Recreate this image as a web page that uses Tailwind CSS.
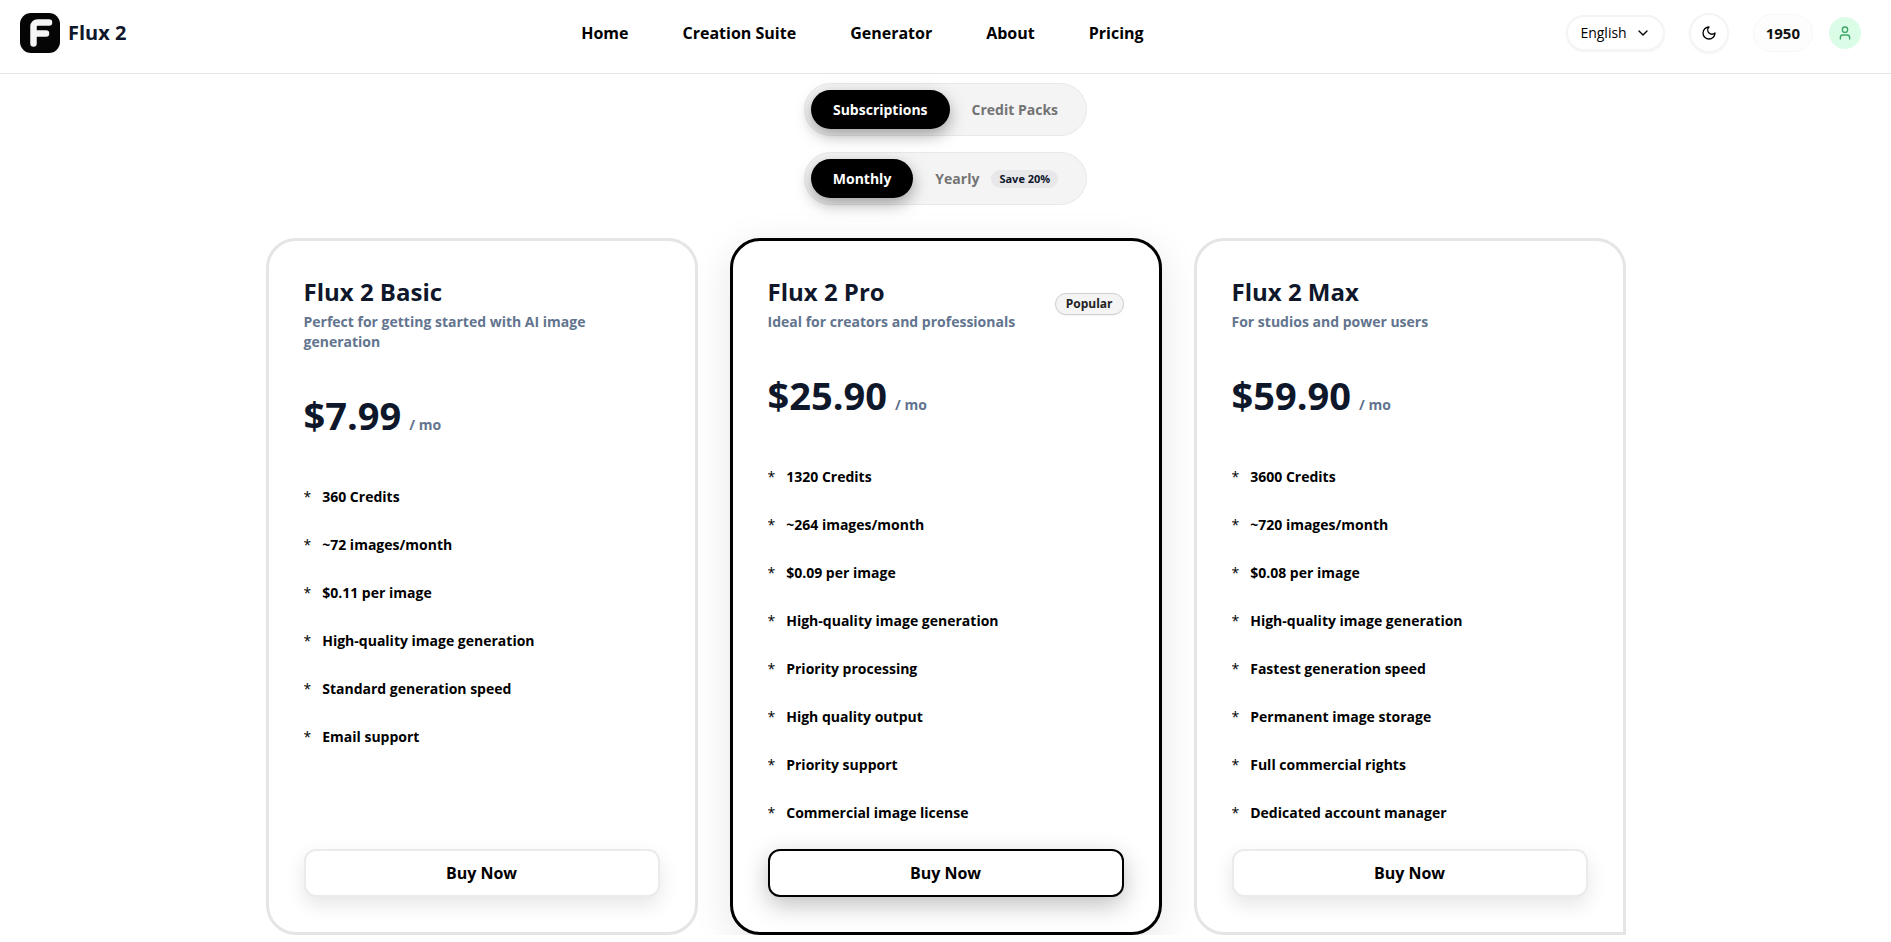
<!DOCTYPE html>
<html lang="en">
	<head>
		<meta charset="UTF-8" />
		<meta name="viewport" content="width=device-width, initial-scale=1.0" />
		<title>Flux 2 - Pricing</title>
		<script src="https://cdn.jsdelivr.net/npm/@tailwindcss/browser@4"></script>
	</head>
	<body class="bg-white font-['Open_Sans','Noto_Sans',sans-serif] text-black">
		<header class="flex items-center border-b border-[#e3e3e3] pt-[13px] pr-[30px] pb-5 pl-5">
			<a href="#" class="flex items-center gap-2">
				<svg viewBox="0 0 40 40" class="h-10 w-10">
					<rect width="40" height="40" rx="11" fill="#050505" />
					<path
						d="M13.5 30.5V13.5a4 4 0 0 1 4-4H29M13.5 20.5H26"
						fill="none"
						stroke="#f5f5f5"
						stroke-width="6.5"
						stroke-linecap="round"
						stroke-linejoin="round" />
				</svg>
				<span class="text-xl leading-7 font-bold text-slate-900">Flux 2</span>
			</a>
			<nav class="flex flex-1 justify-center gap-[54px] pl-8 text-base font-bold">
				<a href="#">Home</a>
				<a href="#">Creation Suite</a>
				<a href="#">Generator</a>
				<a href="#">About</a>
				<a href="#">Pricing</a>
			</nav>
			<div class="flex items-center gap-6">
				<button class="flex h-9 items-center gap-2 rounded-full border-2 border-[#f4f4f4] px-3 text-sm shadow-xs">
					English
					<svg
						viewBox="0 0 24 24"
						fill="none"
						stroke="currentColor"
						stroke-width="2"
						stroke-linecap="round"
						stroke-linejoin="round"
						class="h-4 w-4">
						<path d="m6 9 6 6 6-6" />
					</svg>
				</button>
				<button
					aria-label="Dark mode"
					class="flex h-10 w-10 items-center justify-center rounded-full border-2 border-[#f4f4f4] shadow-xs">
					<svg
						viewBox="0 0 24 24"
						fill="none"
						stroke="currentColor"
						stroke-width="2"
						stroke-linecap="round"
						stroke-linejoin="round"
						class="h-4 w-4">
						<path d="M12 3a6 6 0 0 0 9 9 9 9 0 1 1-9-9Z" />
					</svg>
				</button>
				<div class="flex items-center gap-4">
					<span
						class="flex h-[38px] items-center rounded-full border border-[#f7f7f7] bg-[#fdfdfd] px-3 text-[15px] font-bold text-[#111]"
						>1950</span
					>
					<button
						aria-label="Account"
						class="flex h-8 w-8 items-center justify-center rounded-full bg-green-100 text-[#3fa66b]">
						<svg
							viewBox="0 0 24 24"
							fill="none"
							stroke="currentColor"
							stroke-width="2"
							stroke-linecap="round"
							stroke-linejoin="round"
							class="h-4 w-4">
							<path d="M19 21v-2a4 4 0 0 0-4-4H9a4 4 0 0 0-4 4v2" />
							<circle cx="12" cy="7" r="4" />
						</svg>
					</button>
				</div>
			</div>
		</header>

		<main class="mx-auto max-w-[1360px] pt-[9px]">
			<div class="flex flex-col items-center gap-4 text-sm font-bold">
				<div class="flex rounded-full border border-[#e8e8e8] bg-[#f4f4f4] p-1.5">
					<button class="h-[39px] rounded-full bg-black px-[22px] text-white shadow-[0_6px_16px_rgba(0,0,0,0.35)]">
						Subscriptions
					</button>
					<button class="h-[39px] rounded-full px-[22px] text-[#737373]">Credit Packs</button>
				</div>
				<div class="flex rounded-full border border-[#e8e8e8] bg-[#f4f4f4] p-1.5">
					<button class="h-[39px] rounded-full bg-black px-[22px] text-white shadow-[0_6px_16px_rgba(0,0,0,0.35)]">
						Monthly
					</button>
					<button class="flex h-[39px] items-center gap-3 rounded-full px-[22px] text-[#737373]">
						Yearly
						<span class="rounded-full bg-[#e8e8ea] px-2 text-[11px] leading-[18px] text-slate-900">Save 20%</span>
					</button>
				</div>
			</div>

			<div class="mt-[33px] grid grid-cols-3 gap-8">
				<section class="flex flex-col rounded-[30px] border-3 border-[#e5e5e5] bg-white p-[35px]">
					<h2 class="text-2xl leading-8 font-bold text-slate-900">Flux 2 Basic</h2>
					<p class="mt-1 max-w-[290px] text-sm leading-5 font-bold text-slate-500">
						Perfect for getting started with AI image generation
					</p>
					<p class="mt-[39px] flex items-baseline gap-2 leading-12 font-bold text-slate-900">
						<span class="text-[38px]">$7.99</span>
						<span class="text-sm font-bold text-slate-500">/ mo</span>
					</p>
					<ul class="mt-12 flex flex-col gap-7 text-sm leading-5 font-bold">
						<li class="flex gap-[11px]"><span class="font-normal">*</span>360 Credits</li>
						<li class="flex gap-[11px]"><span class="font-normal">*</span>~72 images/month</li>
						<li class="flex gap-[11px]"><span class="font-normal">*</span>$0.11 per image</li>
						<li class="flex gap-[11px]"><span class="font-normal">*</span>High-quality image generation</li>
						<li class="flex gap-[11px]"><span class="font-normal">*</span>Standard generation speed</li>
						<li class="flex gap-[11px]"><span class="font-normal">*</span>Email support</li>
					</ul>
					<button
						class="mt-auto h-12 rounded-xl border-2 border-[#ebebeb] bg-white text-base font-bold shadow-[0_8px_20px_rgba(0,0,0,0.1)]">
						Buy Now
					</button>
				</section>

				<section
					class="flex flex-col rounded-[30px] border-3 border-black bg-white p-[35px] shadow-[0_10px_40px_rgba(0,0,0,0.1)]">
					<div class="flex items-center justify-between">
						<div>
							<h2 class="text-2xl leading-8 font-bold text-slate-900">Flux 2 Pro</h2>
							<p class="mt-1 text-sm leading-5 font-bold text-slate-500">Ideal for creators and professionals</p>
						</div>
						<span
							class="rounded-full border border-[#d0d0d0] bg-[#f4f4f4] px-2.5 text-xs leading-5 font-bold text-[#222] shadow-xs"
							>Popular</span
						>
					</div>
					<p class="mt-[39px] flex items-baseline gap-2 leading-12 font-bold text-slate-900">
						<span class="text-[38px]">$25.90</span>
						<span class="text-sm font-bold text-slate-500">/ mo</span>
					</p>
					<ul class="mt-12 flex flex-col gap-7 text-sm leading-5 font-bold">
						<li class="flex gap-[11px]"><span class="font-normal">*</span>1320 Credits</li>
						<li class="flex gap-[11px]"><span class="font-normal">*</span>~264 images/month</li>
						<li class="flex gap-[11px]"><span class="font-normal">*</span>$0.09 per image</li>
						<li class="flex gap-[11px]"><span class="font-normal">*</span>High-quality image generation</li>
						<li class="flex gap-[11px]"><span class="font-normal">*</span>Priority processing</li>
						<li class="flex gap-[11px]"><span class="font-normal">*</span>High quality output</li>
						<li class="flex gap-[11px]"><span class="font-normal">*</span>Priority support</li>
						<li class="flex gap-[11px]"><span class="font-normal">*</span>Commercial image license</li>
					</ul>
					<button
						class="mt-[26px] h-12 rounded-xl border-2 border-black bg-white text-base font-bold shadow-[0_8px_24px_rgba(0,0,0,0.25)]">
						Buy Now
					</button>
				</section>

				<section class="flex flex-col rounded-[30px] rounded-br-none border-3 border-[#e5e5e5] bg-white p-[35px]">
					<h2 class="text-2xl leading-8 font-bold text-slate-900">Flux 2 Max</h2>
					<p class="mt-1 text-sm leading-5 font-bold text-slate-500">For studios and power users</p>
					<p class="mt-[39px] flex items-baseline gap-2 leading-12 font-bold text-slate-900">
						<span class="text-[38px]">$59.90</span>
						<span class="text-sm font-bold text-slate-500">/ mo</span>
					</p>
					<ul class="mt-12 flex flex-col gap-7 text-sm leading-5 font-bold">
						<li class="flex gap-[11px]"><span class="font-normal">*</span>3600 Credits</li>
						<li class="flex gap-[11px]"><span class="font-normal">*</span>~720 images/month</li>
						<li class="flex gap-[11px]"><span class="font-normal">*</span>$0.08 per image</li>
						<li class="flex gap-[11px]"><span class="font-normal">*</span>High-quality image generation</li>
						<li class="flex gap-[11px]"><span class="font-normal">*</span>Fastest generation speed</li>
						<li class="flex gap-[11px]"><span class="font-normal">*</span>Permanent image storage</li>
						<li class="flex gap-[11px]"><span class="font-normal">*</span>Full commercial rights</li>
						<li class="flex gap-[11px]"><span class="font-normal">*</span>Dedicated account manager</li>
					</ul>
					<button
						class="mt-auto h-12 rounded-xl border-2 border-[#ebebeb] bg-white text-base font-bold shadow-[0_8px_20px_rgba(0,0,0,0.1)]">
						Buy Now
					</button>
				</section>
			</div>
		</main>
	</body>
</html>
